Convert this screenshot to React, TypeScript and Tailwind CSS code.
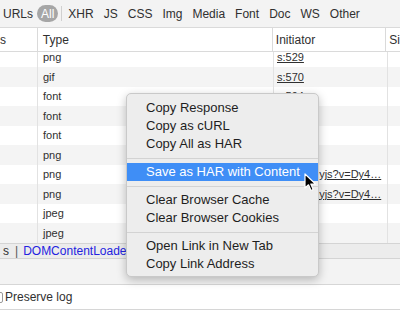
const FILTERS = ["XHR", "JS", "CSS", "Img", "Media", "Font", "Doc", "WS", "Other"];

const ROWS: { type: string; initiator?: string }[] = [
  { type: "png", initiator: "s:529" },
  { type: "gif", initiator: "s:570" },
  { type: "font", initiator: "s:594" },
  { type: "font", initiator: "s:594" },
  { type: "font", initiator: "s:594" },
  { type: "png", initiator: "s:610" },
  { type: "png", initiator: "s:lazylazyjs?v=Dy4…" },
  { type: "png", initiator: "s:lazylazyjs?v=Dy4…" },
  { type: "jpeg" },
  { type: "jpeg" },
];

const MENU: (string | null)[] = [
  "Copy Response",
  "Copy as cURL",
  "Copy All as HAR",
  null,
  "Save as HAR with Content",
  null,
  "Clear Browser Cache",
  "Clear Browser Cookies",
  null,
  "Open Link in New Tab",
  "Copy Link Address",
];

function Cursor() {
  return (
    <svg width="13" height="19" viewBox="0 0 13 19" className="absolute left-[304px] top-[173px]">
      <path
        d="M1 1 L1 15 L4.5 11.8 L7 17.5 L9.2 16.5 L6.8 11 L11.5 11 Z"
        fill="#000"
        stroke="#fff"
        strokeWidth="1.2"
        strokeLinejoin="round"
      />
    </svg>
  );
}

export default function App() {
  return (
    <div
      className="relative flex h-[314px] w-[400px] flex-col overflow-hidden bg-white text-[#303030]"
      style={{ fontFamily: '"Liberation Sans", Arial, sans-serif' }}
    >
      {/* filter bar */}
      <div className="flex h-[28px] shrink-0 items-center border-b border-[#dadada] bg-[#f3f3f3] text-[12px]">
        <span className="ml-[3px]">URLs</span>
        <span className="ml-[4px] flex h-[17px] items-center rounded-full bg-[#a6a6a6] px-[4px] text-white">All</span>
        <span className="ml-[3px] h-[15px] w-px bg-[#d0d0d0]" />
        <div className="ml-[6px] flex gap-[10px]">
          {FILTERS.map((f) => (
            <span key={f}>{f}</span>
          ))}
        </div>
      </div>

      {/* header */}
      <div className="flex h-[24px] shrink-0 border-b border-[#dadada] bg-white text-[12px]">
        <div className="flex w-[38px] items-center overflow-hidden border-r border-[#dadada]">
          <span>s</span>
        </div>
        <div className="flex w-[236px] items-center border-r border-[#dadada] pl-[5px]">Type</div>
        <div className="flex w-[114px] items-center border-r border-[#dadada] pl-[3px]">Initiator</div>
        <div className="flex flex-1 items-center pl-[3px]">Si</div>
      </div>

      {/* rows */}
      <div className="h-[191px] shrink-0 overflow-hidden">
        <div className="-mt-[4.5px]">
          {ROWS.map((r, i) => (
            <div
              key={i}
              className={`flex h-[19.5px] text-[11px] ${i % 2 === 1 ? "bg-[#f4f4f4]" : "bg-white"}`}
            >
              <div className="w-[38px] border-r border-[#e2e2e2]" />
              <div className="flex w-[236px] items-center border-r border-[#e2e2e2] pl-[5px]">{r.type}</div>
              <div className="flex w-[114px] items-center overflow-hidden whitespace-nowrap border-r border-[#e2e2e2] pl-[3px]">
                {r.initiator && <span className="underline">{r.initiator}</span>}
              </div>
              <div className="flex-1" />
            </div>
          ))}
        </div>
      </div>

      {/* status bar */}
      <div className="flex h-[16px] shrink-0 items-center border-y border-[#d4d4d4] bg-[#ececec] text-[12px]">
        <div className="flex w-[127px] items-center overflow-hidden whitespace-nowrap">
          <span className="ml-[3px]">s</span>
          <span className="ml-[6px] text-[#555]">|</span>
          <span className="ml-[5px] text-[#2323e0]">DOMContentLoaded</span>
        </div>
      </div>

      <div className="h-[26px] shrink-0 border-b border-[#d6d6d6] bg-[#f3f3f3]" />

      <div className="flex h-[25px] shrink-0 items-center border-b border-[#d6d6d6] bg-white text-[12px]">
        <span className="-ml-[8px] h-[11px] w-[11px] shrink-0 rounded-[2px] border border-[#9a9a9a] bg-white" />
        <span className="ml-[2px]">Preserve log</span>
      </div>

      {/* context menu */}
      <div className="absolute left-[126px] top-[93px] w-[193px] rounded-[5px] border border-[#c9c9c9] bg-[#ededed] pb-[3px] pt-[5px] text-[13px] text-[#1e1e1e] shadow-[0_3px_10px_rgba(0,0,0,0.25)]">
        {MENU.map((item, i) =>
          item === null ? (
            <div key={i} className="flex h-[10px] items-center">
              <div className="h-px w-full bg-[#d3d3d3]" />
            </div>
          ) : (
            <div
              key={i}
              className={`flex h-[18px] items-center pl-[19px] ${
                item === "Save as HAR with Content" ? "bg-[#3f8ef6] text-white" : ""
              }`}
            >
              {item}
            </div>
          )
        )}
      </div>

      <Cursor />
    </div>
  );
}
